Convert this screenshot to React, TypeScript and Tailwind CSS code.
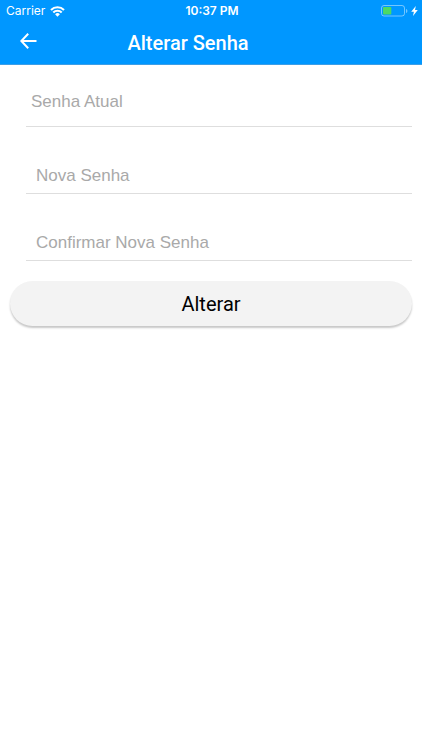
import type { ReactNode } from "react";

interface FieldProps {
  id: string;
  label: string;
  className: string;
}

export default function App() {
  return (
    <div className="min-h-screen bg-white font-['Roboto',sans-serif]">
      <header className="bg-[#0097ff] text-white border-b border-[#3d9ee6]">
        <StatusBar />
        <NavBar>Alterar Senha</NavBar>
      </header>

      <main>
        <form className="px-[10px]" onSubmit={(e) => e.preventDefault()}>
          <div className="flex flex-col pl-4">
            <Field id="current" label="Senha Atual" className="h-[62px] pt-3 px-[5px]" />
            <Field id="new" label="Nova Senha" className="h-[67px] pt-8 px-[10px]" />
            <Field id="confirm" label="Confirmar Nova Senha" className="h-[67px] pt-8 px-[10px]" />
          </div>

          <button
            type="submit"
            className="mt-5 h-[45px] w-full rounded-full bg-[#f3f3f3] text-xl text-black shadow-[0_2px_2px_rgba(0,0,0,0.22)]"
          >
            Alterar
          </button>
        </form>
      </main>
    </div>
  );
}

function StatusBar() {
  return (
    <div className="grid h-[22px] grid-cols-3 items-center pl-[6px] pr-1 font-['Inter',sans-serif] text-xs">
      <div className="flex items-center gap-[5px]">
        <span>Carrier</span>
        <WifiIcon />
      </div>
      <span className="text-center font-semibold">10:37 PM</span>
      <div className="flex items-center justify-end gap-[3px]">
        <BatteryIcon />
        <BoltIcon />
      </div>
    </div>
  );
}

function NavBar({ children }: { children: ReactNode }) {
  return (
    <div className="grid h-[42px] grid-cols-[48px_1fr_94px] items-center">
      <button type="button" aria-label="Voltar" className="flex h-10 items-center pb-1 pl-5">
        <svg width="17" height="16" viewBox="0 0 17 16" fill="none" stroke="currentColor" strokeWidth="2">
          <path d="M8.200.8 1.300 8l6.900 7.200M1.300 8H16.500" />
        </svg>
      </button>
      <h1 className="text-center text-xl font-medium">{children}</h1>
    </div>
  );
}

function Field({ id, label, className }: FieldProps) {
  return (
    <div className={`flex items-center border-b border-[#dedede] ${className}`}>
      <input
        id={id}
        type="password"
        aria-label={label}
        placeholder={label}
        className="w-full bg-transparent font-['Liberation_Sans',sans-serif] text-[17px] leading-6 text-black outline-none placeholder:text-[#a9a9a9]"
      />
    </div>
  );
}

function WifiIcon() {
  return (
    <svg width="15" height="11" viewBox="0 0 15 11" fill="none" stroke="currentColor" strokeWidth="2.1">
      <path d="M1 4a9.200 9.200 0 0 1 13 0" />
      <path d="M3.300 6.500a5.900 5.900 0 0 1 8.400 0" />
      <path d="M7.500 10.800 5.100 8.300a3.300 3.300 0 0 1 4.800 0z" fill="currentColor" stroke="none" />
    </svg>
  );
}

function BatteryIcon() {
  return (
    <svg width="27" height="12" viewBox="0 0 27 12">
      <rect x="0.5" y="0.5" width="23" height="10.5" rx="2.5" fill="none" stroke="#fff" strokeOpacity="0.45" />
      <rect x="2" y="2" width="8.3" height="7.5" rx="0.8" fill="#4cd964" />
      <path d="M25 4v4c1-.4 1.400-1.100 1.400-2S26 4.400 25 4z" fill="#fff" fillOpacity="0.45" />
    </svg>
  );
}

function BoltIcon() {
  return (
    <svg width="7" height="10" viewBox="0 0 7 10" fill="currentColor">
      <path d="M4.800 0 .2 5.800h2.700L2 10l4.800-5.900H4z" />
    </svg>
  );
}
